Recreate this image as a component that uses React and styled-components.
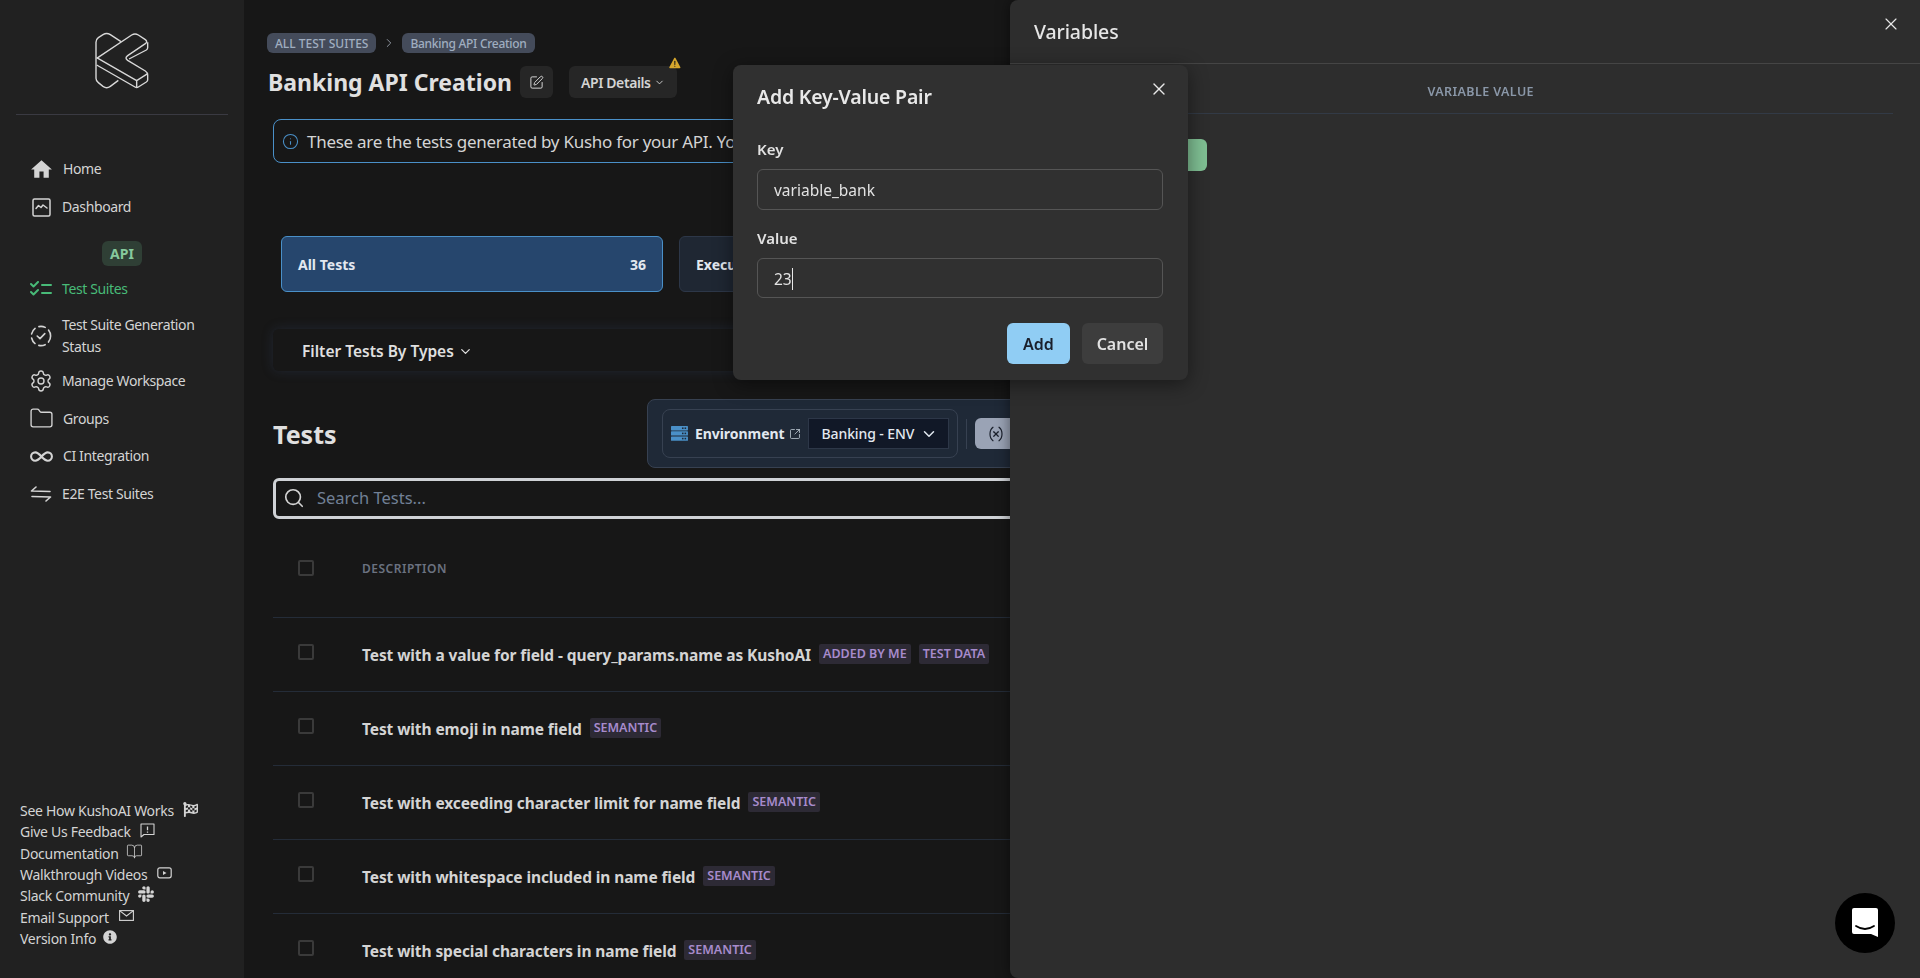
import React from 'react';
import styled, { createGlobalStyle } from 'styled-components';
import {
  BookOpen,
  ChevronDown,
  ChevronRight,
  Folder,
  Info,
  Infinity as InfinityIcon,
  Search,
  Settings,
  SquareArrowOutUpRight,
  SquarePen,
  Variable,
  X,
} from 'lucide-react';
import { FaFlagCheckered, FaSlack, FaInfoCircle } from 'react-icons/fa';
import { MdHome } from 'react-icons/md';
import { IoWarning } from 'react-icons/io5';

const GlobalStyle = createGlobalStyle`
  * { box-sizing: border-box; }
  html, body { margin: 0; padding: 0; height: 100%; background: #171717; }
  body { font-family: "Noto Sans", "Open Sans", sans-serif; overflow: hidden; }
`;

const KushoLogo = () => (
  <svg width="75" height="70" viewBox="0 0 225 210" fill="none" stroke="#d8d8d8" strokeWidth="4.2" strokeLinejoin="round">
    <path d="M108 50 L76 29 Q65 22 54 29 L40 38 Q33 43 33 52 V160 Q33 168 40 173 L54 184 Q65 192 76 184 L100 166" />
    <path d="M35 100 L140 30 Q150 24 160 30 L181 44 Q189 50 181 56 L128 92 Q118 99 128 106 L181 138 Q188 143 188 150 V165 Q188 168 184 171 L160 186 Q155 189 150 186 L35 120" />
    <path d="M188 52 V68 Q188 72 184 75 L132 102" />
    <path d="M35 98 L155 167 L188 146 M155 167 V188" />
  </svg>
);

const DashboardIcon = () => (
  <svg width="19" height="19" viewBox="0 0 19 19" fill="none" stroke="currentColor" strokeWidth="1.5" strokeLinejoin="round" strokeLinecap="round">
    <rect x="1" y="1" width="17" height="17" rx="1.5" />
    <path d="M4 10.5 L6.5 7.5 L9 9.5 L11 7 L15 10" />
  </svg>
);

const ChecklistIcon = () => (
  <svg width="22" height="16" viewBox="0 0 22 16" fill="none" stroke="currentColor" strokeWidth="2" strokeLinecap="round" strokeLinejoin="round">
    <path d="M1 3 L3.5 5.5 L8 1" />
    <path d="M1 11 L3.5 13.5 L8 9" />
    <path d="M12 4 H21 M12 12 H21" />
  </svg>
);

const StatusIcon = () => (
  <svg width="22" height="22" viewBox="0 0 22 22" fill="none" stroke="currentColor" strokeWidth="1.6" strokeLinecap="round" strokeLinejoin="round">
    <circle cx="11" cy="11" r="9.6" strokeDasharray="6.5 4.2" />
    <path d="M7.2 11 L10 13.6 L14.8 8.6" />
  </svg>
);

const SwapIcon = () => (
  <svg width="22" height="16" viewBox="0 0 22 16" fill="none" stroke="currentColor" strokeWidth="1.6" strokeLinecap="round" strokeLinejoin="round">
    <path d="M6 1 L1.5 5 L20 5.5" />
    <path d="M16 15 L20.5 11 L2 10.5" />
  </svg>
);

const FeedbackIcon = () => (
  <svg width="15" height="15" viewBox="0 0 15 15" fill="none" stroke="currentColor" strokeWidth="1.1" strokeLinejoin="round">
    <path d="M1 1 H14 V11.5 H4 L1 14 Z" />
    <path d="M7.5 3.5 V7.2 M7.5 8.6 V9.8" strokeWidth="1.3" />
  </svg>
);

const VideoIcon = () => (
  <svg width="15" height="12" viewBox="0 0 15 12" fill="none" stroke="currentColor" strokeWidth="1.2">
    <rect x="0.8" y="0.8" width="13.4" height="10" rx="2" />
    <path d="M6 4 L9.5 6 L6 8 Z" fill="currentColor" stroke="none" />
  </svg>
);

const MailIcon = () => (
  <svg width="15" height="11" viewBox="0 0 15 11" fill="none" stroke="currentColor" strokeWidth="1.1">
    <rect x="0.6" y="0.6" width="13.8" height="9.8" />
    <path d="M0.6 0.6 L7.5 6 L14.4 0.6" />
  </svg>
);

const ServerIcon = () => (
  <svg width="17" height="15" viewBox="0 0 17 15">
    {[0, 5.2, 10.4].map((y) => (
      <g key={y}>
        <rect x="0" y={y} width="17" height="4.4" rx="0.6" fill="#4a90c8" />
        <rect x="11" y={y + 1.4} width="1.6" height="1.6" fill="#1f2a3a" />
        <rect x="13.6" y={y + 1.4} width="1.6" height="1.6" fill="#1f2a3a" />
      </g>
    ))}
  </svg>
);

const MessengerIcon = () => (
  <svg width="28" height="32" viewBox="0 0 28 32">
    <path d="M3 1 H25 Q27 1 27 3 V30 L20 27 H3 Q1 27 1 25 V3 Q1 1 3 1 Z" fill="#fff" />
    <path d="M5 19 Q14 25 23 19" fill="none" stroke="#000" strokeWidth="1.8" strokeLinecap="round" />
  </svg>
);

const navItems = [
  { label: 'Home', icon: <MdHome size={25} />, height: 38 },
  { label: 'Dashboard', icon: <DashboardIcon />, height: 38 },
];

const apiItems = [
  { label: 'Test Suites', icon: <ChecklistIcon />, height: 36, top: 0, active: true },
  { label: 'Test Suite Generation Status', icon: <StatusIcon />, height: 44, top: 6.5 },
  { label: 'Manage Workspace', icon: <Settings size={24} strokeWidth={1.4} />, height: 37, top: 4.5 },
  { label: 'Groups', icon: <Folder size={25} strokeWidth={1.3} />, height: 37, top: 1 },
  { label: 'CI Integration', icon: <InfinityIcon size={25} strokeWidth={2} />, height: 37, top: 0.5 },
  { label: 'E2E Test Suites', icon: <SwapIcon />, height: 37, top: 0.5 },
];

const helpLinks = [
  { label: 'See How KushoAI Works', icon: <FaFlagCheckered size={15} />, gap: 9 },
  { label: 'Give Us Feedback', icon: <FeedbackIcon />, gap: 9 },
  { label: 'Documentation', icon: <BookOpen size={17} strokeWidth={1.1} />, gap: 7 },
  { label: 'Walkthrough Videos', icon: <VideoIcon />, gap: 10 },
  { label: 'Slack Community', icon: <FaSlack size={18} />, gap: 8 },
  { label: 'Email Support', icon: <MailIcon />, gap: 10 },
  { label: 'Version Info', icon: <FaInfoCircle size={14} />, gap: 7 },
];

const tests = [
  { title: 'Test with a value for field - query_params.name as KushoAI', tags: ['ADDED BY ME', 'TEST DATA'] },
  { title: 'Test with emoji in name field', tags: ['SEMANTIC'] },
  { title: 'Test with exceeding character limit for name field', tags: ['SEMANTIC'] },
  { title: 'Test with whitespace included in name field', tags: ['SEMANTIC'] },
  { title: 'Test with special characters in name field', tags: ['SEMANTIC'] },
];

const App = () => {
  return (
    <Page>
      <GlobalStyle />
      <Sidebar>
        <LogoBox>
          <KushoLogo />
        </LogoBox>
        <Nav>
          {navItems.map((item) => (
            <NavItem key={item.label} $height={item.height}>
              <NavIcon>{item.icon}</NavIcon>
              {item.label}
            </NavItem>
          ))}
          <ApiBadgeRow>
            <ApiBadge>API</ApiBadge>
          </ApiBadgeRow>
          {apiItems.map((item) => (
            <NavItem key={item.label} $height={item.height} $top={item.top} $active={item.active}>
              <NavIcon>{item.icon}</NavIcon>
              <NavLabel>{item.label}</NavLabel>
            </NavItem>
          ))}
        </Nav>
        <HelpLinks>
          {helpLinks.map((link) => (
            <HelpLink key={link.label} $gap={link.gap}>
              {link.label}
              {link.icon}
            </HelpLink>
          ))}
        </HelpLinks>
      </Sidebar>

      <Main>
        <Breadcrumbs>
          <Crumb>ALL TEST SUITES</Crumb>
          <ChevronRight size={14} strokeWidth={1.5} color="#9ca3af" />
          <Crumb $tight>Banking API Creation</Crumb>
        </Breadcrumbs>

        <TitleRow>
          <PageTitle>Banking API Creation</PageTitle>
          <EditButton>
            <SquarePen size={15} strokeWidth={1.6} />
          </EditButton>
          <DetailsButton>
            API Details
            <ChevronDown size={11} strokeWidth={2} />
            <WarningBadge>
              <IoWarning size={14} />
            </WarningBadge>
          </DetailsButton>
        </TitleRow>

        <InfoBanner>
          <Info size={17} strokeWidth={1.5} color="#4a90c8" />
          These are the tests generated by Kusho for your API. You can review them here.
        </InfoBanner>

        <Cards>
          <StatCard $active>
            All Tests
            <span>36</span>
          </StatCard>
          <StatCard>Executed</StatCard>
        </Cards>

        <FilterBar>
          Filter Tests By Types
          <ChevronDown size={15} strokeWidth={2} />
        </FilterBar>

        <ToolRow>
          <SectionTitle>Tests</SectionTitle>
          <EnvPanel>
            <EnvGroup>
              <ServerIcon />
              <EnvLabel>Environment</EnvLabel>
              <SquareArrowOutUpRight size={12} strokeWidth={1.5} color="#cbd5e0" />
              <EnvSelect>
                Banking - ENV
                <ChevronDown size={18} strokeWidth={2} />
              </EnvSelect>
            </EnvGroup>
            <EnvDivider />
            <VariableButton>
              <Variable size={18} strokeWidth={1.6} />
            </VariableButton>
          </EnvPanel>
        </ToolRow>

        <SearchBox>
          <Search size={22} strokeWidth={1.8} color="#d4d4d4" />
          <SearchInput placeholder="Search Tests..." readOnly />
        </SearchBox>

        <TableHead>
          <Checkbox />
          <HeadLabel>DESCRIPTION</HeadLabel>
        </TableHead>
        {tests.map((test) => (
          <TestRow key={test.title}>
            <Checkbox />
            <TestTitle>{test.title}</TestTitle>
            <Tags>
              {test.tags.map((tag) => (
                <Tag key={tag}>{tag}</Tag>
              ))}
            </Tags>
          </TestRow>
        ))}
      </Main>

      <Drawer>
        <DrawerHeader>
          Variables
          <DrawerClose>
            <X size={20} strokeWidth={1.4} />
          </DrawerClose>
        </DrawerHeader>
        <DrawerBody>
          <VariableColumns>
            <ColumnLabel>VARIABLE VALUE</ColumnLabel>
          </VariableColumns>
          <AddVariable />
        </DrawerBody>
      </Drawer>

      <Modal>
        <ModalHeader>
          Add Key-Value Pair
          <ModalClose>
            <X size={20} strokeWidth={1.6} />
          </ModalClose>
        </ModalHeader>
        <FieldLabel>Key</FieldLabel>
        <FieldInput>variable_bank</FieldInput>
        <FieldLabel>Value</FieldLabel>
        <FieldInput>
          23
          <Caret />
        </FieldInput>
        <ModalActions>
          <PrimaryButton>Add</PrimaryButton>
          <SecondaryButton>Cancel</SecondaryButton>
        </ModalActions>
      </Modal>

      <Messenger>
        <MessengerIcon />
      </Messenger>
    </Page>
  );
};

export default App;

const Page = styled.div`
  display: flex;
  width: 100%;
  height: 978px;
  overflow: hidden;
  background: #171717;
  color: #d4d4d4;
`;

const Sidebar = styled.aside`
  display: flex;
  flex-direction: column;
  flex: 0 0 244px;
  height: 100%;
  padding-bottom: 29px;
  background: #212121;
`;

const LogoBox = styled.div`
  display: flex;
  justify-content: center;
  height: 115px;
  margin: 0 16px;
  padding-top: 25px;
  border-bottom: 1px solid #3a3a42;
`;

const Nav = styled.nav`
  display: flex;
  flex-direction: column;
  margin-top: 35px;
  padding: 0 20px 0 29px;
`;

const NavItem = styled.div`
  display: flex;
  align-items: center;
  gap: 9px;
  min-height: ${(p) => p.$height}px;
  margin-top: ${(p) => p.$top || 0}px;
  font-size: 14px;
  letter-spacing: -0.38px;
  line-height: 22px;
  color: ${(p) => (p.$active ? '#48bb78' : '#d4d4d4')};
`;

const NavIcon = styled.span`
  display: flex;
  align-items: center;
  justify-content: center;
  flex: 0 0 24px;
`;

const NavLabel = styled.span`
  max-width: 150px;
`;

const ApiBadgeRow = styled.div`
  display: flex;
  justify-content: center;
  margin: 15px 0 5px;
  padding-right: 9px;
`;

const ApiBadge = styled.span`
  width: 40px;
  height: 25px;
  border-radius: 6px;
  background: #2f3f35;
  color: #86c99c;
  font-size: 14px;
  font-weight: 700;
  line-height: 25px;
  text-align: center;
`;

const HelpLinks = styled.div`
  display: flex;
  flex-direction: column;
  margin-top: auto;
  padding-left: 20px;
`;

const HelpLink = styled.div`
  display: flex;
  align-items: center;
  gap: ${(p) => p.$gap}px;
  height: 21.3px;
  font-size: 14px;
  letter-spacing: -0.29px;
  color: #d4d4d4;

  svg {
    margin-top: -3px;
  }
`;

const Main = styled.main`
  flex: 1;
  min-width: 0;
  height: 100%;
  padding: 33px 0 0 23px;
  overflow: hidden;
`;

const Breadcrumbs = styled.div`
  display: flex;
  align-items: center;
  gap: 6px;
`;

const Crumb = styled.span`
  height: 20px;
  padding: 0 8px;
  border-radius: 6px;
  background: #444b5a;
  color: #a0aec0;
  font-size: 12px;
  font-weight: 500;
  letter-spacing: ${(p) => (p.$tight ? '-0.28px' : '0')};
  line-height: 21px;
`;

const TitleRow = styled.div`
  display: flex;
  align-items: center;
  height: 32px;
  margin-top: 13px;
  padding-left: 1px;
`;

const PageTitle = styled.h1`
  margin: 0 8px 0 0;
  color: #e0e0e0;
  font-size: 23px;
  font-weight: 700;
  line-height: 32px;
`;

const EditButton = styled.button`
  display: flex;
  align-items: center;
  justify-content: center;
  width: 33px;
  height: 32px;
  margin-right: 16px;
  padding: 0;
  border: 0;
  border-radius: 6px;
  background: #262626;
  color: #d4d4d4;
`;

const DetailsButton = styled.button`
  position: relative;
  display: flex;
  align-items: center;
  gap: 3px;
  width: 108px;
  height: 32px;
  padding: 0 0 0 12px;
  border: 0;
  border-radius: 6px;
  background: #262626;
  color: #d4d4d4;
  font-family: inherit;
  font-size: 14px;
  font-weight: 600;
  letter-spacing: -0.4px;
`;

const WarningBadge = styled.span`
  position: absolute;
  top: -10px;
  right: -5px;
  display: flex;
  color: #d6a62c;
`;

const InfoBanner = styled.div`
  display: flex;
  align-items: center;
  gap: 8px;
  height: 44px;
  margin: 21px 0 0 6px;
  padding-left: 8px;
  border: 1px solid #4a90c8;
  border-radius: 8px;
  color: #d4d4d4;
  font-size: 17px;
  letter-spacing: -0.27px;
  white-space: nowrap;
`;

const Cards = styled.div`
  display: flex;
  gap: 16px;
  margin: 73px 0 0 14px;
`;

const StatCard = styled.div`
  display: flex;
  align-items: center;
  justify-content: space-between;
  width: 382px;
  height: 56px;
  padding: 0 16px;
  border: 1px solid ${(p) => (p.$active ? '#4a90c8' : '#2d3748')};
  border-radius: 6px;
  background: ${(p) => (p.$active ? '#26466d' : '#1f2733')};
  color: #e2e8f0;
  font-size: 14px;
  font-weight: 700;
`;

const FilterBar = styled.div`
  display: flex;
  align-items: center;
  gap: 4px;
  height: 42px;
  margin: 37px 0 0 6px;
  padding: 2px 0 0 29px;
  border-radius: 6px;
  background: #171717;
  box-shadow: 0 0 12px rgba(60, 80, 120, 0.28);
  color: #e0e0e0;
  font-size: 15.5px;
  font-weight: 600;
`;

const ToolRow = styled.div`
  display: flex;
  align-items: center;
  height: 69px;
  margin: 28px 0 0 6px;
`;

const SectionTitle = styled.h2`
  flex: 0 0 374px;
  margin: 1px 0 0;
  color: #e0e0e0;
  font-size: 25px;
  font-weight: 700;
`;

const EnvPanel = styled.div`
  display: flex;
  align-items: center;
  gap: 8px;
  width: 500px;
  height: 69px;
  padding: 0 14px;
  border: 1px solid #374151;
  border-radius: 8px;
  background: #1f2937;
`;

const EnvGroup = styled.div`
  display: flex;
  align-items: center;
  width: 296px;
  height: 49px;
  padding: 0 8px;
  border: 1px solid #374151;
  border-radius: 8px;
`;

const EnvLabel = styled.span`
  margin: 0 4px 0 7px;
  color: #e2e8f0;
  font-size: 14px;
  font-weight: 700;
  letter-spacing: -0.05px;
`;

const EnvSelect = styled.div`
  display: flex;
  align-items: center;
  justify-content: space-between;
  width: 141px;
  height: 31px;
  margin-left: 8px;
  padding: 0 10px 0 12px;
  border: 1px solid #2d3748;
  background: #111827;
  color: #e2e8f0;
  font-size: 14px;
  font-weight: 500;
  letter-spacing: -0.1px;
`;

const EnvDivider = styled.span`
  width: 1px;
  height: 30px;
  background: #374151;
`;

const VariableButton = styled.button`
  display: flex;
  align-items: center;
  justify-content: center;
  width: 44px;
  height: 31px;
  padding: 0 2px 0 0;
  border: 0;
  border-radius: 6px;
  background: #9aa3b5;
  color: #1a202c;
`;

const SearchBox = styled.div`
  display: flex;
  align-items: center;
  gap: 10px;
  height: 41px;
  margin: 10px 0 0 6px;
  padding: 0 0 2px 7px;
  border: 3px solid #cfd2d6;
  border-radius: 6px;
`;

const SearchInput = styled.input`
  flex: 1;
  border: 0;
  outline: 0;
  background: transparent;
  font-family: inherit;
  font-size: 16.5px;
  color: #d4d4d4;

  &::placeholder {
    color: #718096;
    opacity: 1;
  }
`;

const Checkbox = styled.span`
  flex: 0 0 16px;
  height: 16px;
  border: 2px solid #3a3a3a;
  border-radius: 2px;
`;

const TableHead = styled.div`
  display: flex;
  align-items: center;
  gap: 48px;
  height: 99px;
  margin-left: 6px;
  padding-left: 25px;
  border-bottom: 1px solid #242c38;
`;

const HeadLabel = styled.span`
  color: #6b7280;
  font-size: 12px;
  font-weight: 600;
  letter-spacing: 0.5px;
`;

const TestRow = styled.div`
  display: flex;
  align-items: center;
  height: 74px;
  margin-left: 6px;
  padding-left: 25px;
  border-bottom: 1px solid #242c38;

  ${Checkbox} {
    margin: -6px 48px 0 0;
  }
`;

const TestTitle = styled.span`
  color: #d4d4d4;
  font-size: 15.5px;
  font-weight: 700;
  letter-spacing: -0.1px;
`;

const Tags = styled.div`
  display: flex;
  gap: 8px;
  margin: -1px 0 0 8px;
`;

const Tag = styled.span`
  height: 20px;
  padding: 0 4px;
  border-radius: 2px;
  background: #2d2a35;
  color: #a78bcc;
  font-size: 12.5px;
  font-weight: 600;
  line-height: 20px;
`;

const Drawer = styled.section`
  position: fixed;
  top: 0;
  right: 0;
  bottom: 0;
  width: 910px;
  border-radius: 8px 0 0 8px;
  background: #2d2d2d;
  box-shadow: 0 0 14px rgba(0, 0, 0, 0.5);
`;

const DrawerHeader = styled.header`
  position: relative;
  height: 64px;
  padding: 17px 24px;
  border-bottom: 1px solid #454545;
  color: #e6e6e6;
  font-size: 19.5px;
  font-weight: 500;
  letter-spacing: -0.1px;
  line-height: 30px;
`;

const DrawerClose = styled.span`
  position: absolute;
  top: 14px;
  right: 19px;
  display: flex;
  color: #e6e6e6;
`;

const DrawerBody = styled.div`
  padding: 0 27px 0 24px;
`;

const VariableColumns = styled.div`
  display: flex;
  justify-content: flex-end;
  height: 50px;
  padding: 19px 359px 0 0;
  border-bottom: 1px solid #323a46;
`;

const ColumnLabel = styled.span`
  color: #8a97a8;
  font-size: 12.5px;
  font-weight: 600;
  line-height: 18px;
  letter-spacing: 0.4px;
`;

const AddVariable = styled.div`
  width: 173px;
  height: 32px;
  margin-top: 25px;
  border-radius: 6px;
  background: #7fbf93;
`;

const Modal = styled.div`
  position: fixed;
  top: 65px;
  left: 733px;
  width: 455px;
  height: 315px;
  padding: 0 25px 0 24px;
  border-radius: 8px;
  background: #303030;
  box-shadow: 0 4px 20px rgba(0, 0, 0, 0.45);
`;

const ModalHeader = styled.header`
  height: 56px;
  padding-top: 16px;
  color: #e8e8e8;
  font-size: 19.5px;
  font-weight: 600;
  letter-spacing: -0.2px;
  line-height: 32px;
`;

const ModalClose = styled.span`
  position: absolute;
  top: 14px;
  right: 19px;
  display: flex;
  color: #e8e8e8;
`;

const FieldLabel = styled.div`
  height: 24px;
  margin-top: 16px;
  color: #e2e2e2;
  font-size: 15px;
  font-weight: 600;
  line-height: 24px;

  & + div + & {
    margin-top: 16px;
  }
`;

const FieldInput = styled.div`
  display: flex;
  align-items: center;
  height: 40.5px;
  margin-top: 8px;
  padding: 2px 0 0 16px;
  border: 1px solid #555;
  border-radius: 6px;
  color: #e2e2e2;
  font-size: 15.5px;
`;

const Caret = styled.span`
  width: 1px;
  height: 22px;
  background: #e8e8e8;
`;

const ModalActions = styled.div`
  display: flex;
  justify-content: flex-end;
  gap: 12px;
  margin-top: 25px;
`;

const PrimaryButton = styled.button`
  width: 63px;
  height: 41px;
  border: 0;
  border-radius: 6px;
  background: #90cdf4;
  color: #1a202c;
  font-family: inherit;
  font-size: 16px;
  font-weight: 600;
`;

const SecondaryButton = styled.button`
  width: 81px;
  height: 41px;
  border: 0;
  border-radius: 6px;
  background: #3d3d3d;
  color: #e2e2e2;
  font-family: inherit;
  font-size: 16px;
  font-weight: 600;
`;

const Messenger = styled.div`
  position: fixed;
  top: 893px;
  left: 1835px;
  display: flex;
  align-items: center;
  justify-content: center;
  width: 60px;
  height: 60px;
  border-radius: 50%;
  background: #000;
`;
